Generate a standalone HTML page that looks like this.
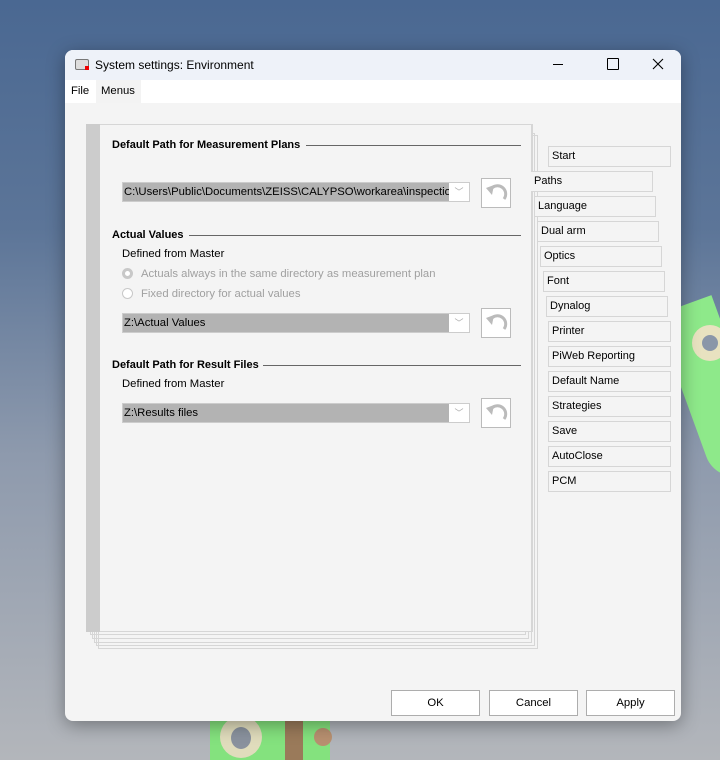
<!DOCTYPE html>
<html><head><style>
body{margin:0;width:720px;height:760px;overflow:hidden;position:relative;font-family:"Liberation Sans",sans-serif;font-size:11.3px;color:#000;
background:linear-gradient(180deg,#4a6892 0%,#5c7598 30%,#8e9aad 60%,#b3b6bb 100%);}
.abs{position:absolute}
.win{left:65px;top:50px;width:616px;height:671px;background:#f4f4f4;border-radius:8px;overflow:hidden;box-shadow:0 4px 18px rgba(0,0,0,.35)}
.title{left:0;top:0;width:616px;height:30px;background:#eef2f9}
.menu{left:0;top:30px;width:616px;height:23px;background:#fff}
.hdr{font-weight:bold;font-size:11px}
.line{height:1px;background:#666}
.combo{height:20px;background:#b3b3b3;border:1px solid #ccc;box-sizing:border-box;overflow:hidden}
.combo span{position:absolute;left:1px;top:3px;white-space:nowrap}
.combo i{position:absolute;right:0;top:0;width:20px;height:18px;background:#fff;color:#aaa;font-style:normal;text-align:center;font-size:9px;line-height:18px}
.undo{width:30px;height:30px;background:#fff;border:1px solid #bbb;box-sizing:border-box}
.tab{height:21px;border:1px solid #d6d6d6;box-sizing:border-box;background:#f4f4f4;padding:3px 0 0 3px;font-size:11px}
.btn{top:640px;width:89px;height:26px;border:1px solid #adadad;background:#fff;box-sizing:border-box;text-align:center;line-height:24px}
.fr{border:1px solid #d6d6d6;box-sizing:border-box}
.grey{color:#a0a0a0}
.radio{width:11px;height:11px;border:1px solid #c8c8c8;border-radius:50%;box-sizing:border-box;background:#fff}
</style></head><body>
<div class="abs" style="left:684px;top:300px;width:60px;height:180px;background:#8ee98a;border-radius:30px 0 0 30px;transform:rotate(-20deg)"></div>
<div class="abs" style="left:692px;top:325px;width:36px;height:36px;border-radius:50%;background:#e8e2c0"></div>
<div class="abs" style="left:702px;top:335px;width:16px;height:16px;border-radius:50%;background:#8a96a8"></div>
<div class="abs" style="left:210px;top:715px;width:120px;height:45px;background:#84e27e"></div>
<div class="abs" style="left:220px;top:716px;width:42px;height:42px;border-radius:50%;background:#e0dcbc"></div>
<div class="abs" style="left:231px;top:727px;width:20px;height:22px;border-radius:50%;background:#8a929e"></div>
<div class="abs" style="left:285px;top:715px;width:18px;height:45px;background:#9a7a5a"></div>
<div class="abs" style="left:314px;top:728px;width:18px;height:18px;border-radius:50%;background:#b89070"></div>

<div class="abs win">
 <div class="abs title">
  <div class="abs" style="left:10px;top:9px;width:12px;height:9px;border:1.5px solid #777;border-radius:2px;background:#ddd"></div>
  <div class="abs" style="left:20px;top:16px;width:4px;height:4px;background:#e00"></div>
  <div class="abs" style="left:30px;top:8px;font-size:12px">System settings: Environment</div>
  <div class="abs" style="left:488px;top:14px;width:10px;height:1px;background:#000"></div>
  <div class="abs" style="left:542px;top:8px;width:10px;height:10px;border:1px solid #000;border-radius:1px"></div>
  <svg class="abs" style="left:587px;top:8px" width="12" height="12"><path d="M1 1L11 11M11 1L1 11" stroke="#000" stroke-width="1.1"/></svg>
 </div>
 <div class="abs menu">
  <div class="abs" style="left:6px;top:5px">File</div>
  <div class="abs" style="left:31px;top:0;width:45px;height:23px;background:#f3f3f3"></div>
  <div class="abs" style="left:36px;top:5px">Menus</div>
 </div>
 <div class="abs fr" style="left:33px;top:85px;width:440px;height:514px"></div>
 <div class="abs fr" style="left:31px;top:83px;width:439px;height:513px"></div>
 <div class="abs fr" style="left:29px;top:81px;width:438px;height:512px"></div>
 <div class="abs fr" style="left:27px;top:79px;width:437px;height:510px"></div>
 <div class="abs fr" style="left:25px;top:77px;width:436px;height:508px"></div>
 <div class="abs fr" style="left:21px;top:74px;width:447px;height:508px;background:#f4f4f4"></div>
 <div class="abs" style="left:21px;top:74px;width:446px;height:508px;border:1px solid #d6d6d6;border-right:none;box-sizing:border-box;background:#f4f4f4"></div>
 <div class="abs" style="left:21px;top:74px;width:14px;height:508px;background:#cccccc"></div>
 <div class="abs" style="left:466px;top:74px;width:1px;height:508px;background:#d6d6d6"></div>

 <div class="abs hdr" style="left:47px;top:89px">Default Path for Measurement Plans</div>
 <div class="abs line" style="left:241px;top:95px;width:215px"></div>
 <div class="abs combo" style="left:57px;top:132px;width:348px"><span>C:\Users\Public\Documents\ZEISS\CALYPSO\workarea\inspection</span><i>﹀</i></div>
 <div class="abs undo" style="left:416px;top:128px"><svg width="28" height="28"><path d="M22 20 A8 8 0 0 0 9 10" fill="none" stroke="#bbb" stroke-width="3"/><path d="M4 9 L12 6 L10 16 Z" fill="#bbb"/></svg></div>

 <div class="abs hdr" style="left:47px;top:179px">Actual Values</div>
 <div class="abs line" style="left:124px;top:185px;width:332px"></div>
 <div class="abs" style="left:57px;top:198px">Defined from Master</div>
 <div class="abs radio" style="left:57px;top:218px;border:3px solid #c8c8c8;background:#fff"></div>
 <div class="abs grey" style="left:76px;top:218px">Actuals always in the same directory as measurement plan</div>
 <div class="abs radio" style="left:57px;top:238px"></div>
 <div class="abs grey" style="left:76px;top:238px">Fixed directory for actual values</div>
 <div class="abs combo" style="left:57px;top:263px;width:348px"><span>Z:\Actual Values</span><i>﹀</i></div>
 <div class="abs undo" style="left:416px;top:258px"><svg width="28" height="28"><path d="M22 20 A8 8 0 0 0 9 10" fill="none" stroke="#bbb" stroke-width="3"/><path d="M4 9 L12 6 L10 16 Z" fill="#bbb"/></svg></div>

 <div class="abs hdr" style="left:47px;top:309px">Default Path for Result Files</div>
 <div class="abs line" style="left:198px;top:315px;width:258px"></div>
 <div class="abs" style="left:57px;top:328px">Defined from Master</div>
 <div class="abs combo" style="left:57px;top:353px;width:348px"><span>Z:\Results files</span><i>﹀</i></div>
 <div class="abs undo" style="left:416px;top:348px"><svg width="28" height="28"><path d="M22 20 A8 8 0 0 0 9 10" fill="none" stroke="#bbb" stroke-width="3"/><path d="M4 9 L12 6 L10 16 Z" fill="#bbb"/></svg></div>

 <div class="abs tab" style="left:483px;top:96px;width:123px">Start</div>
 <div class="abs tab" style="left:466px;top:121px;width:122px;border-left:none">Paths</div>
 <div class="abs tab" style="left:469px;top:146px;width:122px">Language</div>
 <div class="abs tab" style="left:472px;top:171px;width:122px">Dual arm</div>
 <div class="abs tab" style="left:475px;top:196px;width:122px">Optics</div>
 <div class="abs tab" style="left:478px;top:221px;width:122px">Font</div>
 <div class="abs tab" style="left:481px;top:246px;width:122px">Dynalog</div>
 <div class="abs tab" style="left:483px;top:271px;width:123px">Printer</div>
 <div class="abs tab" style="left:483px;top:296px;width:123px">PiWeb Reporting</div>
 <div class="abs tab" style="left:483px;top:321px;width:123px">Default Name</div>
 <div class="abs tab" style="left:483px;top:346px;width:123px">Strategies</div>
 <div class="abs tab" style="left:483px;top:371px;width:123px">Save</div>
 <div class="abs tab" style="left:483px;top:396px;width:123px">AutoClose</div>
 <div class="abs tab" style="left:483px;top:421px;width:123px">PCM</div>

 <div class="abs btn" style="left:326px">OK</div>
 <div class="abs btn" style="left:424px">Cancel</div>
 <div class="abs btn" style="left:521px">Apply</div>
</div>
</body></html>
